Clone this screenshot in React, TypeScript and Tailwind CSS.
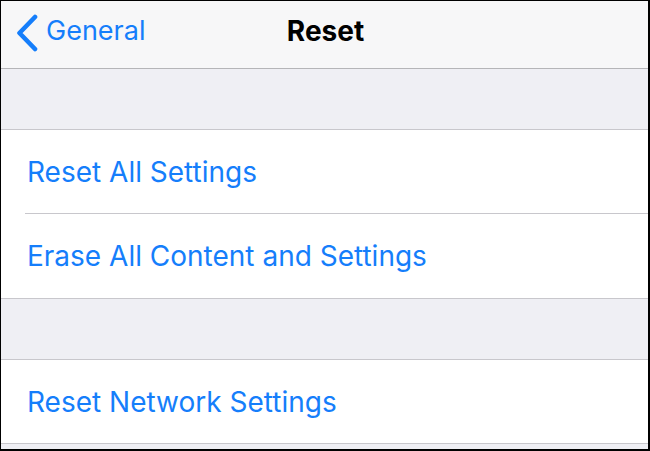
export default function App() {
  const font = { fontFamily: 'Inter, "Open Sans", sans-serif' };
  return (
    <div className="w-[650px] h-[451px] bg-black pt-[1px] pl-[1px] pr-[2px] pb-[2px]" style={font}>
      <div className="w-full h-full bg-[#efeff4] flex flex-col overflow-hidden">
        <div className="h-[68px] shrink-0 bg-[#f7f7f8] border-b border-[#b5b5b8] relative flex items-center justify-center">
          <div className="absolute left-[14px] top-0 h-full flex items-center gap-[7px]">
            <svg width="24" height="38" viewBox="0 0 24 38" className="mt-[-4px]">
              <path d="M20 3 L4.5 19 L20 35" fill="none" stroke="#157efb" strokeWidth="4.6" strokeLinecap="round" strokeLinejoin="round" />
            </svg>
            <span className="text-[27px] text-[#157efb] mt-[-7px]">General</span>
          </div>
          <span className="text-[28px] font-bold text-black mt-[-7px] ml-[2px]">Reset</span>
        </div>
        <div className="h-[61px] shrink-0 border-b border-[#c8c7cc]" />
        <div className="bg-white shrink-0">
          <div className="h-[83px] flex items-center pl-[26px] text-[28px] text-[#157efb]">Reset All Settings</div>
          <div className="ml-[24px] h-px bg-[#c8c7cc]" />
          <div className="h-[84px] flex items-center pl-[26px] text-[28px] text-[#157efb]">Erase All Content and Settings</div>
        </div>
        <div className="h-[62px] shrink-0 border-t border-b border-[#c8c7cc]" />
        <div className="bg-white shrink-0 h-[84px] flex items-center pl-[26px] text-[28px] text-[#157efb] border-b border-[#c8c7cc]">Reset Network Settings</div>
        <div className="flex-1" />
      </div>
    </div>
  );
}
